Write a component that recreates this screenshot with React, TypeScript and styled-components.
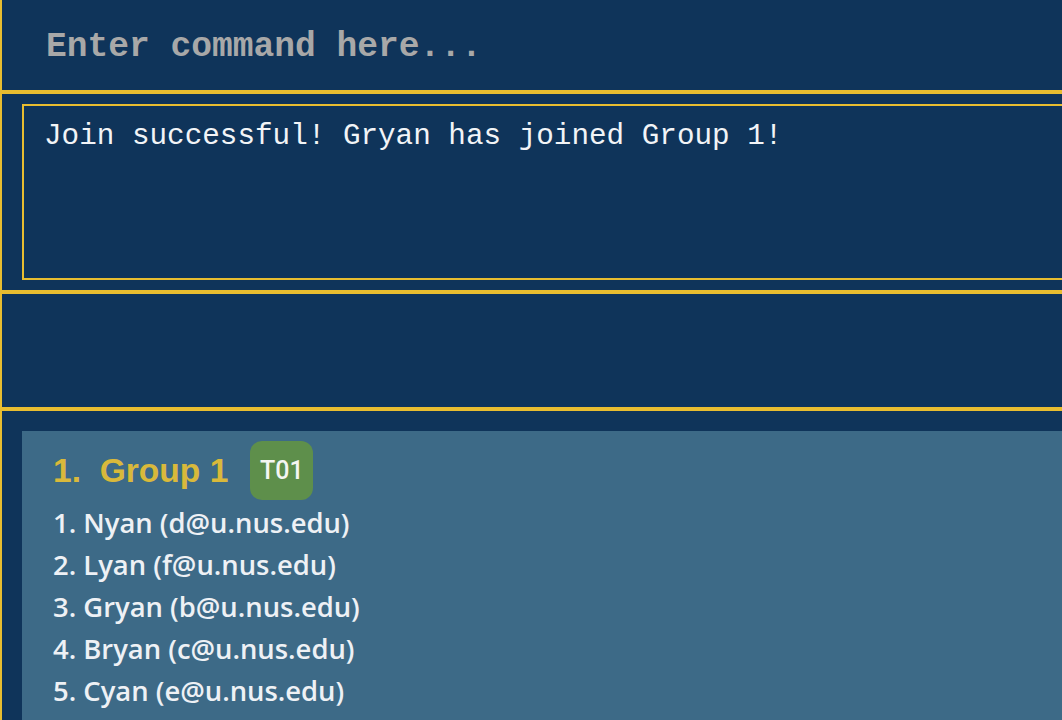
import React from "react";
import styled, { createGlobalStyle } from "styled-components";

const GlobalStyle = createGlobalStyle`
  html, body {
    margin: 0;
    padding: 0;
    background-color: #0f345a;
    overflow: hidden;
  }
`;

const Window = styled.div`
  width: 1062px;
  height: 720px;
  background-color: #0f345a;
  border-left: 2px solid #e8bd30;
  box-sizing: border-box;
  display: flex;
  flex-direction: column;
  overflow: hidden;
`;

const CommandBox = styled.div`
  height: 90px;
  border-bottom: 4px solid #e8bd30;
  display: flex;
  align-items: center;
  padding-left: 44px;
  box-sizing: content-box;
`;

const Placeholder = styled.div`
  font-family: "Liberation Mono", "Courier New", monospace;
  font-weight: bold;
  font-size: 34.6px;
  color: #a8a8a8;
  padding-top: 3px;
`;

const ResultSection = styled.div`
  height: 176px;
  padding: 10px 0 10px 20px;
  border-bottom: 4px solid #e8bd30;
`;

const ResultBox = styled.div`
  height: 100%;
  box-sizing: border-box;
  border: 2px solid #e8bd30;
  border-right: none;
  padding: 14px 20px;
  font-family: "Liberation Mono", "Courier New", monospace;
  font-size: 29.3px;
  color: #f2f4f7;
  white-space: pre;
`;

const Spacer = styled.div`
  height: 113px;
  border-bottom: 4px solid #e8bd30;
`;

const ListArea = styled.div`
  flex: 1;
  padding: 20px 0 0 20px;
`;

const GroupCard = styled.div`
  background-color: #3d6a87;
  height: 100%;
  padding: 10px 0 0 31px;
  box-sizing: border-box;
`;

const TitleRow = styled.div`
  display: flex;
  align-items: center;
  gap: 22px;
  margin-bottom: 2px;
`;

const GroupName = styled.div`
  font-family: "Liberation Sans", Arial, sans-serif;
  font-weight: bold;
  font-size: 33.6px;
  color: #d9b93b;
  white-space: pre;
`;

const Badge = styled.div`
  width: 63px;
  height: 59px;
  border-radius: 12px;
  background-color: #5e8f4b;
  color: #f4f6f2;
  display: flex;
  align-items: center;
  justify-content: center;
  font-family: Roboto, "Liberation Sans", Arial, sans-serif;
  font-weight: 500;
  font-size: 25px;
`;

const MemberList = styled.ul`
  list-style: none;
  margin: 0;
  padding: 0;
`;

const Member = styled.li`
  font-family: "Open Sans", "Noto Sans", sans-serif;
  font-weight: 600;
  font-size: 27.4px;
  line-height: 42px;
  color: #eef1f5;
`;

const members = [
  { name: "Nyan", email: "d@u.nus.edu" },
  { name: "Lyan", email: "f@u.nus.edu" },
  { name: "Gryan", email: "b@u.nus.edu" },
  { name: "Bryan", email: "c@u.nus.edu" },
  { name: "Cyan", email: "e@u.nus.edu" },
];

const App = () => {
  return (
    <>
      <GlobalStyle />
      <Window>
        <CommandBox>
          <Placeholder>Enter command here...</Placeholder>
        </CommandBox>
        <ResultSection>
          <ResultBox>Join successful! Gryan has joined Group 1!</ResultBox>
        </ResultSection>
        <Spacer />
        <ListArea>
          <GroupCard>
            <TitleRow>
              <GroupName>{"1.  Group 1"}</GroupName>
              <Badge>T01</Badge>
            </TitleRow>
            <MemberList>
              {members.map((m, i) => (
                <Member key={m.email}>
                  {`${i + 1}. ${m.name} (${m.email})`}
                </Member>
              ))}
            </MemberList>
          </GroupCard>
        </ListArea>
      </Window>
    </>
  );
};

export default App;
